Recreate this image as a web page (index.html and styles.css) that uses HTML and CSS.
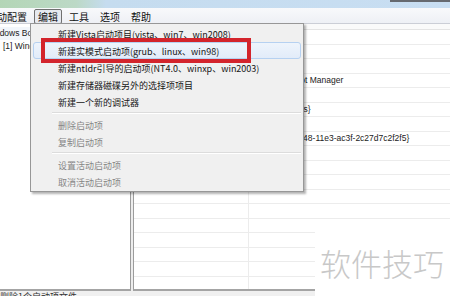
FILE: index.html
```html
<!DOCTYPE html>
<html lang="zh-CN">
<head>
    <meta charset="UTF-8">
    <title>BCD 编辑</title>
    <link rel="stylesheet" href="styles.css">
</head>
<body>
    <div class="window">
        <div class="titlebar">
            <span class="caption-btn"></span>
        </div>

        <div class="menubar">
            <span class="menu-item">启动配置</span>
            <span class="menu-item open">编辑</span>
            <span class="menu-item">工具</span>
            <span class="menu-item">选项</span>
            <span class="menu-item">帮助</span>
        </div>

        <div class="main">
            <div class="tree">
                <div class="tree-root">Windows Boot Manager</div>
                <div class="tree-node">[1] Windows 7</div>
            </div>
            <div class="splitter"></div>
            <div class="props">
                <div class="props-head"></div>
                <div class="row"><span class="key">identifier</span><span class="val">{bootmgr}</span></div>
                <div class="row"><span class="key">device</span><span class="val">C:</span></div>
                <div class="row"><span class="key">path</span><span class="val">\bootmgr</span></div>
                <div class="row"><span class="key">description</span><span class="val">Windows Boot Manager</span></div>
                <div class="row"><span class="key">locale</span><span class="val">zh-CN</span></div>
                <div class="row"><span class="key">inherit</span><span class="val">{globalsettings}</span></div>
                <div class="row"><span class="key">timeout</span><span class="val"></span></div>
                <div class="row"><span class="key">default</span><span class="val">{5a0c1e72-9f48-11e3-ac3f-2c27d7c2f2f5}</span></div>
                <div class="row"><span class="key"></span><span class="val"></span></div>
                <div class="row"><span class="key"></span><span class="val"></span></div>
                <div class="row"><span class="key"></span><span class="val"></span></div>
                <div class="row"><span class="key"></span><span class="val"></span></div>
                <div class="row"><span class="key"></span><span class="val"></span></div>
                <div class="row"><span class="key"></span><span class="val"></span></div>
                <div class="row"><span class="key"></span><span class="val"></span></div>
                <div class="row"><span class="key"></span><span class="val"></span></div>
                <div class="row"><span class="key"></span><span class="val"></span></div>
                <div class="row"><span class="key"></span><span class="val"></span></div>
            </div>
        </div>

        <div class="statusbar">删除1个启动项文件</div>

        <!-- the open 编辑 menu -->
        <div class="dropdown">
            <div class="drop-item">新建Vista启动项目(vista、win7、win2008)</div>
            <div class="drop-item hover">新建实模式启动项(grub、linux、win98)</div>
            <div class="drop-item">新建ntldr引导的启动项(NT4.0、winxp、win2003)</div>
            <div class="drop-item">新建存储器磁碟另外的选择项项目</div>
            <div class="drop-item">新建一个新的调试器</div>
            <div class="drop-sep"></div>
            <div class="drop-item disabled">删除启动项</div>
            <div class="drop-item disabled">复制启动项</div>
            <div class="drop-sep"></div>
            <div class="drop-item disabled">设置活动启动项</div>
            <div class="drop-item disabled">取消活动启动项</div>
        </div>

        <div class="mark-box"></div>
    </div>

    <div class="watermark">软件技巧</div>
</body>
</html>
```

FILE: styles.css
```css
body {
    margin: 0;
    width: 450px;
    height: 296px;
    overflow: hidden;
    position: relative;
    background: #ffffff;
    font-family: "Liberation Sans", "Noto Sans CJK SC", sans-serif;
}
.window {
    position: relative;
    width: 464px;
    margin-left: -14px;
}
.titlebar {
    height: 8px;
    display: flex;
    justify-content: flex-end;
    background: linear-gradient(to right, #b2d5b4 0, #bcd9c6 90px, #c5dcef 120px, #c8def2 100%);
}
.caption-btn {
    width: 60px;
    height: 2px;
    background: #666a70;
}
.menubar {
    height: 15px;
    display: flex;
    gap: 3px;
    margin-left: -3px;
    background: linear-gradient(#f8f9fb, #eef0f5);
    border-bottom: 1px solid #cbced6;
    font-family: "Noto Sans CJK SC", sans-serif;
    font-size: 10px;
}
.menu-item {
    height: 13px;
    line-height: 13px;
    margin-top: 1px;
    padding: 0 3px;
    border: 1px solid transparent;
    color: #111;
}
.menu-item.open {
    border-color: #707070;
    border-radius: 2px;
    background: #e6e9ef;
}
.main {
    display: flex;
    height: 267px;
}
.tree {
    width: 144px;
    border-right: 1px solid #9c9c9c;
    border-bottom: 2px solid #a4a4a4;
    background: #fff;
    font-size: 8.5px;
    color: #222;
    overflow: hidden;
    white-space: nowrap;
}
.tree-root {
    height: 13px;
    line-height: 13px;
    margin-top: 3px;
    text-indent: -1px;
    background: #f2f6fb;
}
.tree-node {
    height: 13px;
    line-height: 13px;
    padding-left: 17px;
}
.splitter {
    width: 2px;
    background: #ededed;
}
.props {
    flex: 1;
    border-left: 1px solid #9c9c9c;
    border-bottom: 2px solid #a4a4a4;
    overflow: hidden;
    font-size: 8.5px;
    color: #222;
}
.props-head {
    height: 5px;
    border-bottom: 1px solid #e4e4e4;
    background: #fafafa;
}
.row {
    display: flex;
    height: 14.5px;
    box-sizing: border-box;
    border-bottom: 1px solid #ececec;
    line-height: 13.5px;
    white-space: nowrap;
}
.key {
    width: 115px;
    padding-left: 4px;
    box-sizing: border-box;
    border-right: 1px solid #ececec;
}
.val {
    padding-left: 4px;
}
.statusbar {
    height: 5px;
    overflow: hidden;
    padding-left: 14px;
    background: #f0f0f0;
    font-family: "Noto Sans CJK SC", sans-serif;
    font-size: 9px;
    line-height: 12px;
    color: #333;
}
.dropdown {
    position: absolute;
    left: 44px;
    top: 23px;
    width: 272px;
    padding: 1px 0;
    background: #f0f0f0;
    border: 1px solid #979797;
    box-shadow: 2px 2px 2px rgba(0, 0, 0, 0.3);
    font-family: "Noto Sans CJK SC", sans-serif;
    font-size: 9px;
}
.drop-item {
    height: 17px;
    line-height: 17px;
    margin: 0 2px;
    padding-left: 24px;
    box-sizing: border-box;
    border: 1px solid transparent;
    color: #161616;
    white-space: nowrap;
}
.drop-item.hover {
    border-color: #b6d1f1;
    border-radius: 3px;
    background: linear-gradient(#eef4fc, #e2ecf9);
}
.drop-item.disabled {
    color: #858585;
}
.drop-sep {
    height: 1px;
    margin: 2px 2px 2px 21px;
    background: #dcdcdc;
    border-bottom: 1px solid #ffffff;
}
.mark-box {
    position: absolute;
    left: 55px;
    top: 38px;
    width: 202px;
    height: 17px;
    border: 4px solid #d3242c;
}
.watermark {
    position: absolute;
    left: 315px;
    top: 223px;
    width: 135px;
    height: 73px;
    padding: 6px 0 0 5px;
    box-sizing: border-box;
    background: #ffffff;
    color: #c8c8c8;
    font-family: "Noto Sans CJK SC", sans-serif;
    font-size: 31px;
    font-weight: 300;
    line-height: 67px;
    white-space: nowrap;
}
```
